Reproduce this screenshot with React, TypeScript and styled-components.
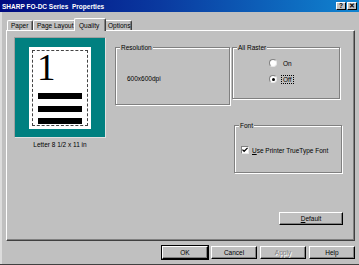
import React from 'react';
import styled, { createGlobalStyle } from 'styled-components';

const Global = createGlobalStyle`
  html, body { margin: 0; padding: 0; background: #c0c0c0; }
  * { box-sizing: border-box; }
  body {
    font-family: "Liberation Sans", Arial, sans-serif;
    font-size: 6.5px;
    color: #000;
  }
`;

const Window = styled.div`
  width: 359px;
  height: 265px;
  background: #c0c0c0;
  display: flex;
  flex-direction: column;
  overflow: hidden;
  border-bottom: 1px solid #404040;
`;

const TitleBar = styled.div`
  height: 12px;
  flex: none;
  background: linear-gradient(90deg, #000a80 0%, #0a3aa0 45%, #1084d0 100%);
  display: flex;
  align-items: center;
  padding: 0 2px 0 2px;
  color: #fff;
  font-weight: bold;
  font-size: 6.5px;
  white-space: pre;
`;

const TitleText = styled.span`
  flex: 1;
`;

const TitleButton = styled.div<{ $gap?: boolean }>`
  width: 10px;
  height: 8px;
  background: #c0c0c0;
  border-top: 1px solid #fff;
  border-left: 1px solid #fff;
  border-right: 1px solid #000;
  border-bottom: 1px solid #000;
  display: flex;
  align-items: center;
  justify-content: center;
  color: #000;
  font-size: 6.5px;
  line-height: 1;
  margin-left: ${p => (p.$gap ? '1px' : '0')};
`;

const Body = styled.div`
  flex: 1;
  border-left: 2px solid #dcdcdc;
  padding: 6px 0 0 4px;
  display: flex;
  flex-direction: column;
`;

const TabRow = styled.div`
  display: flex;
  align-items: flex-end;
  height: 12px;
  padding-left: 1px;
  position: relative;
  z-index: 2;
`;

const Tab = styled.div<{ $active?: boolean; $w: number }>`
  width: ${p => p.$w}px;
  height: ${p => (p.$active ? 13 : 10)}px;
  margin: ${p => (p.$active ? '0 -2px -1px -2px' : '0')};
  padding-left: ${p => (p.$active ? 4 : 3)}px;
  background: #c0c0c0;
  border-top: 1px solid #fff;
  border-left: 1px solid #fff;
  border-right: 1px solid #404040;
  box-shadow: inset -1px 0 0 #808080;
  border-top-left-radius: 2px;
  border-top-right-radius: 2px;
  display: flex;
  align-items: center;
  position: relative;
  z-index: ${p => (p.$active ? 2 : 1)};
  white-space: nowrap;
`;

const Panel = styled.div`
  width: 349px;
  height: 211px;
  border-top: 1px solid #fff;
  border-left: 1px solid #fff;
  border-right: 1px solid #404040;
  border-bottom: 1px solid #404040;
  box-shadow: inset -1px -1px 0 #808080;
  padding: 6px 0 0 7px;
  display: flex;
  align-items: flex-start;
`;

const LeftCol = styled.div`
  width: 92px;
  display: flex;
  flex-direction: column;
  align-items: center;
`;

const Preview = styled.div`
  width: 92px;
  height: 101px;
  background: #008080;
  border-top: 1px solid #a0a0a0;
  border-left: 1px solid #a0a0a0;
  border-right: 1px solid #e0e0e0;
  border-bottom: 1px solid #e0e0e0;
  display: flex;
  align-items: center;
  justify-content: center;
`;

const Paper = styled.div`
  width: 62px;
  height: 82px;
  background: #fff;
  padding: 3px;
`;

const Dashed = styled.div`
  width: 100%;
  height: 100%;
  border: 1px dashed #444;
  padding: 2px 0 0 5px;
  display: flex;
  flex-direction: column;
`;

const BigOne = styled.div`
  font-family: "Liberation Serif", "Times New Roman", serif;
  font-size: 37px;
  line-height: 30px;
  height: 34px;
  margin-left: -1px;
`;

const Bar = styled.div`
  width: 44px;
  height: 6px;
  background: #000;
  margin-top: 6.5px;
`;

const Caption = styled.div`
  margin-top: 3px;
  white-space: nowrap;
`;

const Group = styled.div<{ $w: number; $h: number }>`
  width: ${p => p.$w}px;
  height: ${p => p.$h}px;
  border: 1px solid #808080;
  box-shadow: inset 1px 1px 0 #fff, 1px 1px 0 #fff;
  position: relative;
`;

const Legend = styled.span`
  position: absolute;
  top: -4px;
  left: 4px;
  padding: 0 1px;
  background: #c0c0c0;
  line-height: 7px;
  white-space: nowrap;
`;

const MidCol = styled.div`
  margin-left: 9px;
  margin-top: 10px;
`;

const ResText = styled.div`
  padding: 27px 0 0 11px;
`;

const RightCol = styled.div`
  margin-left: 2px;
  width: 111px;
  margin-top: 10px;
  display: flex;
  flex-direction: column;
`;

const RadioList = styled.div`
  padding: 11px 0 0 36px;
  display: flex;
  flex-direction: column;
  gap: 8px;
`;

const RadioRow = styled.div`
  display: flex;
  align-items: center;
  gap: 4px;
  height: 8px;
`;

const RadioCircle = styled.div<{ $checked?: boolean }>`
  width: 8px;
  height: 8px;
  border-radius: 50%;
  background: #fff;
  border-top: 1px solid #808080;
  border-left: 1px solid #808080;
  border-right: 1px solid #e8e8e8;
  border-bottom: 1px solid #e8e8e8;
  display: flex;
  align-items: center;
  justify-content: center;
  &::after {
    content: '';
    width: 3px;
    height: 3px;
    border-radius: 50%;
    background: ${p => (p.$checked ? '#000' : 'transparent')};
  }
`;

const FocusLabel = styled.span<{ $focus?: boolean }>`
  border: 1px dotted ${p => (p.$focus ? '#000' : 'transparent')};
  padding: 0 1px;
  line-height: 7px;
`;

const FontGroupWrap = styled.div`
  margin: 26px 0 0 2px;
`;

const CheckRow = styled.div`
  display: flex;
  align-items: center;
  gap: 3px;
  padding: 20px 0 0 6px;
`;

const CheckBox = styled.div`
  width: 8px;
  height: 8px;
  background: #fff;
  border-top: 1px solid #808080;
  border-left: 1px solid #808080;
  border-right: 1px solid #e8e8e8;
  border-bottom: 1px solid #e8e8e8;
  display: flex;
  align-items: center;
  justify-content: center;
`;

const Underline = styled.span`
  text-decoration: underline;
`;

const Button = styled.div<{ $w?: number; $default?: boolean; $disabled?: boolean }>`
  width: ${p => p.$w ?? 46}px;
  height: 13px;
  background: #c0c0c0;
  border-top: 1px solid #fff;
  border-left: 1px solid #fff;
  border-right: 1px solid #000;
  border-bottom: 1px solid #000;
  box-shadow: inset -1px -1px 0 #808080
    ${p => (p.$default ? ', 0 0 0 1px #000' : '')};
  display: flex;
  align-items: center;
  justify-content: center;
  color: ${p => (p.$disabled ? '#808080' : '#000')};
  text-shadow: ${p => (p.$disabled ? '1px 1px 0 #fff' : 'none')};
  white-space: nowrap;
`;

const DefaultWrap = styled.div`
  align-self: flex-end;
  margin-top: 39px;
`;

const ButtonRow = styled.div`
  display: flex;
  justify-content: flex-end;
  gap: 3px;
  margin-top: 5px;
  padding-right: 4px;
`;

export default function App() {
  return (
    <>
      <Global />
      <Window>
        <TitleBar>
          <TitleText>SHARP FO-DC Series  Properties</TitleText>
          <TitleButton>?</TitleButton>
          <TitleButton $gap>✕</TitleButton>
        </TitleBar>
        <Body>
          <TabRow>
            <Tab $w={26}>Paper</Tab>
            <Tab $w={43}>Page Layout</Tab>
            <Tab $w={32} $active>Quality</Tab>
            <Tab $w={28}>Options</Tab>
          </TabRow>
          <Panel>
            <LeftCol>
              <Preview>
                <Paper>
                  <Dashed>
                    <BigOne>1</BigOne>
                    <Bar />
                    <Bar />
                    <Bar />
                  </Dashed>
                </Paper>
              </Preview>
              <Caption>Letter 8 1/2 x 11 in</Caption>
            </LeftCol>
            <MidCol>
              <Group $w={115} $h={58}>
                <Legend>Resolution</Legend>
                <ResText>600x600dpi</ResText>
              </Group>
            </MidCol>
            <RightCol>
              <Group $w={108} $h={52}>
                <Legend>All Raster</Legend>
                <RadioList>
                  <RadioRow>
                    <RadioCircle />
                    <FocusLabel>On</FocusLabel>
                  </RadioRow>
                  <RadioRow>
                    <RadioCircle $checked />
                    <FocusLabel $focus>Off</FocusLabel>
                  </RadioRow>
                </RadioList>
              </Group>
              <FontGroupWrap>
                <Group $w={108} $h={48}>
                  <Legend>Font</Legend>
                  <CheckRow>
                    <CheckBox>
                      <svg width="6" height="6" viewBox="0 0 7 7">
                        <path d="M0.5 3 L2.5 5 L6.5 1" stroke="#000" strokeWidth="1.4" fill="none" />
                      </svg>
                    </CheckBox>
                    <span>
                      <Underline>U</Underline>se Printer TrueType Font
                    </span>
                  </CheckRow>
                </Group>
              </FontGroupWrap>
              <DefaultWrap>
                <Button $w={64}>
                  <span>
                    <Underline>D</Underline>efault
                  </span>
                </Button>
              </DefaultWrap>
            </RightCol>
          </Panel>
          <ButtonRow>
            <Button $default>OK</Button>
            <Button>Cancel</Button>
            <Button $disabled>Apply</Button>
            <Button>Help</Button>
          </ButtonRow>
        </Body>
      </Window>
    </>
  );
}
